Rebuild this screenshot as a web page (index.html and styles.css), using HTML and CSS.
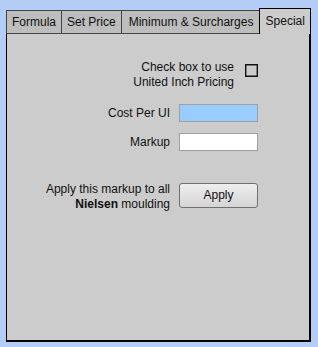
FILE: index.html
```html
<!DOCTYPE html>
<html>
<head>
<meta charset="utf-8">
<link rel="stylesheet" href="styles.css">
</head>
<body>
<div class="wrap">
  <div class="tabs">
    <div class="tab">Formula</div>
    <div class="tab">Set Price</div>
    <div class="tab tab-wide">Minimum &amp; Surcharges</div>
    <div class="tab active">Special</div>
  </div>
  <div class="panel">
    <div class="row row-check">
      <div class="label">Check box to use<br>United Inch Pricing</div>
      <div class="checkbox"></div>
    </div>
    <div class="row row-cost">
      <div class="label">Cost Per UI</div>
      <div class="input blue"></div>
    </div>
    <div class="row row-markup">
      <div class="label">Markup</div>
      <div class="input"></div>
    </div>
    <div class="row row-apply">
      <div class="label">Apply this markup to all<br><b>Nielsen</b> moulding</div>
      <div class="button">Apply</div>
    </div>
  </div>
</div>
</body>
</html>
```

FILE: styles.css
```css
html, body {
  margin: 0;
  padding: 0;
  background: #b4cdf7;
}
body {
  font-family: "Liberation Sans", Arial, sans-serif;
  font-size: 12px;
  line-height: 15px;
  color: #111;
}
.wrap {
  padding: 8px 0 0 6px;
  width: 305px;
}
.tabs {
  display: flex;
  align-items: flex-end;
}
.tab {
  flex: none;
  height: 22px;
  line-height: 22px;
  padding: 0 5px;
  background: #bdbdbd;
  border: 1px solid #444;
  border-right: none;
}
.tab.tab-wide {
  padding: 0 6px 0 7px;
}
.tab.active {
  background: #cccccc;
  height: 25px;
  line-height: 24px;
  border: 1px solid #000;
  border-bottom: none;
  flex: 1;
  text-align: center;
  padding: 0;
}
.panel {
  box-sizing: border-box;
  background: #cccccc;
  border: 1px solid #000;
  border-top: none;
  border-right-width: 2px;
  border-bottom-width: 2px;
  height: 308px;
  padding: 26px 51px 0 0;
  display: flex;
  flex-direction: column;
  align-items: flex-end;
}
.row {
  display: flex;
  align-items: center;
  justify-content: flex-end;
}
.label {
  text-align: right;
}
.row-check {
  align-items: flex-start;
}
.checkbox {
  width: 11px;
  height: 11px;
  border: 1px solid #111;
  box-shadow: inset 0 0 0 0.4px #111;
  margin: 4px 0 0 11px;
}
.input {
  width: 77px;
  height: 16px;
  border: 1px solid #a0a0a0;
  background: #fff;
  margin-left: 9px;
}
.input.blue {
  background: #99ccff;
}
.row-cost {
  margin-top: 14px;
}
.row-markup {
  margin-top: 11px;
}
.row-apply {
  margin-top: 31px;
  align-items: flex-start;
}
.button {
  width: 77px;
  height: 23px;
  margin: 1px 0 0 9px;
  border: 1px solid #707070;
  border-radius: 3px;
  background: linear-gradient(#eeeeee, #d4d4d4);
  text-align: center;
  line-height: 23px;
}
```
